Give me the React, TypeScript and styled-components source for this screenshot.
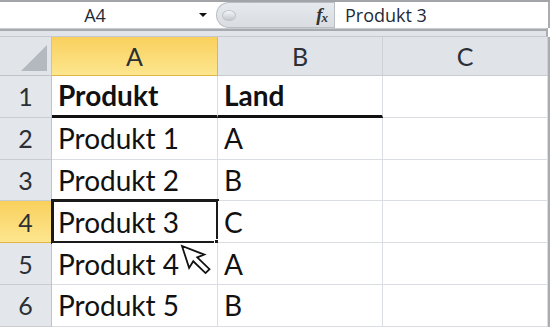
import React from 'react'
import styled, { createGlobalStyle } from 'styled-components'

const GlobalStyle = createGlobalStyle`
  html, body {
    margin: 0;
    padding: 0;
    background: #fff;
  }
`

const Window = styled.div`
  position: relative;
  width: 550px;
  height: 327px;
  overflow: hidden;
  background: #fff;
  box-sizing: border-box;
  border-top: 2px solid #a2a4a7;
`

const FormulaBar = styled.div`
  display: flex;
  height: 26px;
  background: #fff;
  width: 548px;
  border-right: 2px solid #a9adb2;
`

const NameBox = styled.div`
  position: relative;
  width: 216px;
  display: flex;
  align-items: center;
  justify-content: center;
  padding-right: 26px;
  box-sizing: border-box;
  font-family: 'Open Sans', 'Noto Sans', sans-serif;
  font-size: 18px;
  color: #1f2a38;
`

const DropArrow = styled.span`
  position: absolute;
  right: 9px;
  top: 11px;
  width: 0;
  height: 0;
  border-left: 4px solid transparent;
  border-right: 4px solid transparent;
  border-top: 4px solid #111;
`

const ToolStrip = styled.div`
  width: 118px;
  display: flex;
  align-items: center;
  justify-content: space-between;
  padding: 0 7px 0 5px;
  box-sizing: border-box;
  background: linear-gradient(#e6e9ed, #d9dde2);
  border: 1px solid #b9bec5;
  border-right: none;
  border-radius: 13px 0 0 13px;
`

const Grip = styled.span`
  width: 12px;
  height: 9px;
  border-radius: 50%;
  background: linear-gradient(#f5f6f8, #c4c9cf);
  border: 1px solid #c0c5cb;
`

const Fx = styled.span`
  font-family: 'Liberation Serif', 'DejaVu Serif', serif;
  font-style: italic;
  font-weight: bold;
  font-size: 19px;
  color: #333;
  letter-spacing: -1px;

  sub {
    font-size: 13px;
    vertical-align: -1px;
  }
`

const FormulaInput = styled.div`
  flex: 1;
  display: flex;
  align-items: center;
  padding-left: 10px;
  border-left: 1px solid #b9bec5;
  font-family: 'Open Sans', 'Noto Sans', sans-serif;
  font-size: 18px;
  color: #1f2a38;
`

const Divider = styled.div`
  height: 9px;
  width: 548px;
  box-sizing: border-box;
  background: #e1e4e8;
  border-top: 1px solid #c9cdd2;
  border-bottom: 1px solid #c6cace;
  border-right: 2px solid #a9adb2;
  box-shadow: inset 0 2px 0 #a7abb0;
`

const Sheet = styled.div`
  display: grid;
  grid-template-columns: 52px 166px 165px 165px;
  grid-template-rows: 39px repeat(6, 41.8px);
  width: 550px;
  box-sizing: border-box;
  border-right: 2px solid #a9adb2;
  border-bottom: 2px solid #a9adb2;
`

const Corner = styled.div`
  position: relative;
  background: #e1e4e8;
  border-right: 1px solid #bfc4ca;
  border-bottom: 1px solid #bfc4ca;

  &::after {
    content: '';
    position: absolute;
    right: 4px;
    bottom: 4px;
    width: 0;
    height: 0;
    border-left: 26px solid transparent;
    border-bottom: 26px solid #b4b9bf;
  }
`

const HeaderCell = styled.div<{ $active?: boolean; $row?: boolean }>`
  display: flex;
  align-items: center;
  justify-content: center;
  font-family: Lato, 'Open Sans', sans-serif;
  font-size: 25px;
  color: #2b2f36;
  background: ${p =>
    p.$active
      ? 'linear-gradient(#f9d05d, #fde68f)'
      : p.$row
        ? '#e3e6ea'
        : '#e0e3e8'};
  border-right: 1px solid ${p => (p.$active ? '#e2b547' : p.$row ? '#bfc4ca' : '#cdd1d6')};
  border-bottom: 1px solid ${p => (p.$active ? '#e2b547' : '#c8ccd1')};
`

const Cell = styled.div<{ $bold?: boolean; $underline?: boolean }>`
  position: relative;
  display: flex;
  align-items: center;
  padding-left: 6px;
  font-family: Lato, 'Open Sans', sans-serif;
  font-size: 28px;
  font-weight: ${p => (p.$bold ? 700 : 400)};
  color: #111;
  background: #fff;
  border-right: 1px solid #dadde1;
  border-bottom: ${p => (p.$underline ? '3px solid #111' : '1px solid #dadde1')};
`

const Selection = styled.div`
  position: absolute;
  left: -1px;
  top: -2px;
  right: -2px;
  bottom: -2px;
  border: 3px solid #1a1a1a;
  pointer-events: none;

  &::after {
    content: '';
    position: absolute;
    right: -6px;
    bottom: -6px;
    width: 6px;
    height: 6px;
    background: #1a1a1a;
    border: 1px solid #fff;
  }
`

const Pointer = styled.svg`
  position: absolute;
  left: 179px;
  top: 241px;
`

const columns = ['A', 'B', 'C']

const rows: { a: string; b: string; bold?: boolean }[] = [
  { a: 'Produkt', b: 'Land', bold: true },
  { a: 'Produkt 1', b: 'A' },
  { a: 'Produkt 2', b: 'B' },
  { a: 'Produkt 3', b: 'C' },
  { a: 'Produkt 4', b: 'A' },
  { a: 'Produkt 5', b: 'B' },
]

const activeRow = 3

export default function App() {
  return (
    <>
      <GlobalStyle />
      <Window>
        <FormulaBar>
          <NameBox>
            A4
            <DropArrow />
          </NameBox>
          <ToolStrip>
            <Grip />
            <Fx>
              f<sub>x</sub>
            </Fx>
          </ToolStrip>
          <FormulaInput>Produkt 3</FormulaInput>
        </FormulaBar>
        <Divider />
        <Sheet>
          <Corner />
          {columns.map(c => (
            <HeaderCell key={c} $active={c === 'A'}>
              {c}
            </HeaderCell>
          ))}
          {rows.map((r, i) => (
            <React.Fragment key={i}>
              <HeaderCell $row $active={i === activeRow}>
                {i + 1}
              </HeaderCell>
              <Cell $bold={r.bold} $underline={i === 0}>
                {r.a}
                {i === activeRow && <Selection />}
              </Cell>
              <Cell $bold={r.bold} $underline={i === 0}>
                {r.b}
              </Cell>
              <Cell />
            </React.Fragment>
          ))}
        </Sheet>
        <Pointer width="36" height="44" viewBox="0 0 36 44">
          <path
            d="M3 3 L3 26 L9 21 L17 36 L22 33.5 L14 18.5 L21.5 18 Z"
            fill="#fff"
            stroke="#111"
            strokeWidth="1.8"
            strokeLinejoin="miter"
            transform="rotate(-18 3 3)"
          />
        </Pointer>
      </Window>
    </>
  )
}
